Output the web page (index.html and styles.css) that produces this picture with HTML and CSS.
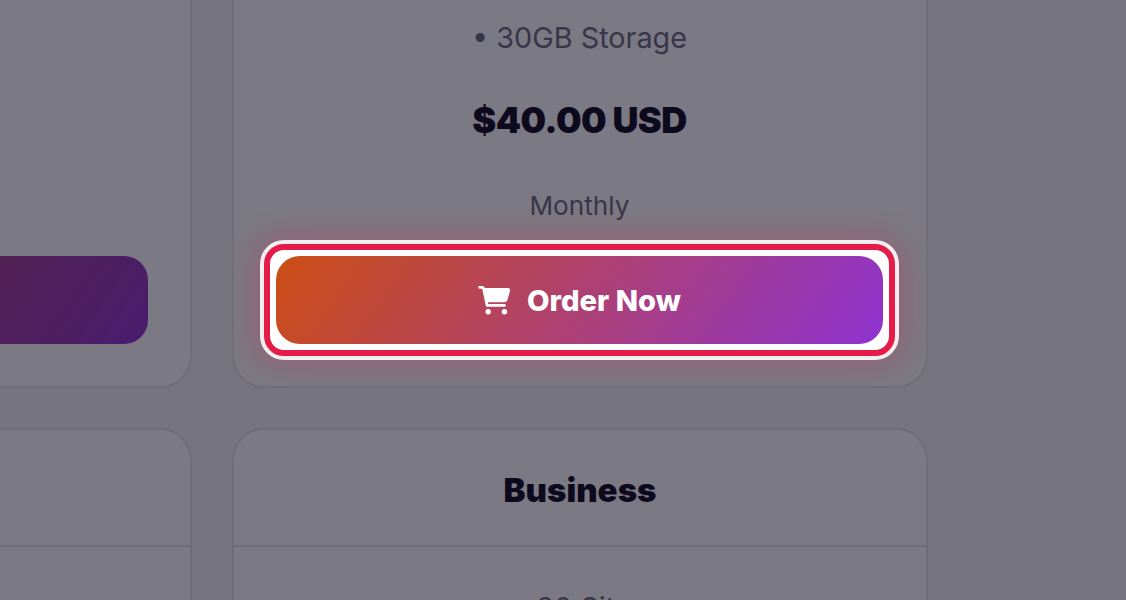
FILE: index.html
```html
<!DOCTYPE html>
<html lang="en">
<head>
    <meta charset="UTF-8">
    <meta name="viewport" content="width=device-width, initial-scale=1.0">
    <title>Hosting Plans</title>
    <link rel="stylesheet" href="styles.css">
</head>
<body>
    <div class="plans">
        <div class="card card-cut-top card-cut-left">
            <div class="card-body">
                <a class="order-btn" href="#" aria-label="Order Now"></a>
            </div>
        </div>

        <div class="card card-cut-top">
            <div class="card-body">
                <p class="feature">&bull; 30GB Storage</p>
                <p class="price">$40.00 USD</p>
                <p class="term">Monthly</p>
                <div class="focus-ring">
                    <a class="order-btn" href="#">
                        <svg class="cart" viewBox="0 0 576 512" aria-hidden="true">
                            <path d="M0 24C0 10.700 10.700 0 24 0H69.500C91.500 0 110.800 14.800 116.500 36H527.700C551.500 36 568.900 58.700 562.600 81.700L521.600 233.700C513.100 265.100 484.600 287 452.100 287H171.500L177.600 319H464C477.300 319 488 329.700 488 343C488 356.300 477.300 367 464 367H157.700C146.200 367 136.300 358.800 134.100 347.500L71.600 49.500C71.200 47.500 69.500 48 69.500 48H24C10.700 48 0 37.300 0 24Z"/>
                            <circle cx="176" cy="456" r="48"/>
                            <circle cx="464" cy="456" r="48"/>
                        </svg>
                        Order Now
                    </a>
                </div>
            </div>
        </div>

        <div class="card card-cut-left">
            <div class="card-title"></div>
        </div>

        <div class="card">
            <h2 class="card-title">Business</h2>
            <div class="card-body card-body-next">
                <p class="feature">&bull; 30 Sites</p>
            </div>
        </div>
    </div>

    <div class="overlay"></div>
</body>
</html>
```

FILE: styles.css
```css
* {
    margin: 0;
    padding: 0;
    box-sizing: border-box;
}

html, body {
    height: 600px;
    overflow: hidden;
}

body {
    font-family: Inter, "Liberation Sans", sans-serif;
    background-color: #f4f4f4;
    color: #0f0b1e;
}

.plans {
    display: grid;
    grid-template-columns: 192px 696px;
    grid-template-rows: 388px 300px;
    gap: 40px;
}

.card {
    display: flex;
    flex-direction: column;
    background: #ffffff;
    border: 2px solid #e4e4e6;
    border-radius: 32px;
    overflow: hidden;
}

.card-cut-top {
    border-top: none;
    border-top-left-radius: 0;
    border-top-right-radius: 0;
}

.card-cut-left {
    border-left: none;
    border-top-left-radius: 0;
    border-bottom-left-radius: 0;
}

.card-title {
    flex: none;
    height: 117px;
    line-height: 120px;
    text-align: center;
    font-size: 33px;
    font-weight: 900;
    border-bottom: 2px solid #e4e4e6;
}

.card-body {
    flex: 1;
    display: flex;
    flex-direction: column;
    justify-content: flex-end;
    padding: 18px 43px 42px 42px;
    text-align: center;
}

.card-cut-left .card-body {
    padding-left: 0;
    padding-right: 42px;
}

.card-body-next {
    justify-content: flex-start;
    padding-top: 41px;
}

.feature {
    font-size: 28.800px;
    line-height: 40px;
    color: #6e6c80;
}

.price {
    font-size: 36px;
    font-weight: 900;
    line-height: 44px;
    letter-spacing: -0.6px;
    margin-top: 40px;
}

.term {
    font-size: 26.200px;
    line-height: 40px;
    color: #6e6c80;
    margin-top: 44px;
}

.order-btn {
    display: flex;
    align-items: center;
    justify-content: center;
    gap: 16px;
    height: 88px;
    margin-top: 30px;
    border-radius: 24px;
    background: linear-gradient(125deg, #cc4e14, #8e33d0);
    color: #ffffff;
    font-size: 29.200px;
    font-weight: 800;
    text-decoration: none;
}

/* only the right end of this button is on screen */
.card-cut-left .order-btn {
    border-top-left-radius: 0;
    border-bottom-left-radius: 0;
    background-size: 608px 100%;
    background-position: right center;
    background-repeat: no-repeat;
}

.focus-ring {
    position: relative;
    z-index: 2;
    margin: 18px -12px -12px;
    padding: 6px;
    background: #ffffff;
    border: 6px solid #e51c4a;
    border-radius: 20px;
    box-shadow: 0 0 0 4px #f3eff0, 0 0 30px 6px rgba(229, 28, 74, 0.3);
}

.focus-ring .order-btn {
    margin-top: 0;
}

.cart {
    width: 33px;
    height: 29px;
    fill: #ffffff;
}

.overlay {
    position: fixed;
    inset: 0;
    z-index: 1;
    background: rgba(15, 11, 30, 0.55);
}
```
